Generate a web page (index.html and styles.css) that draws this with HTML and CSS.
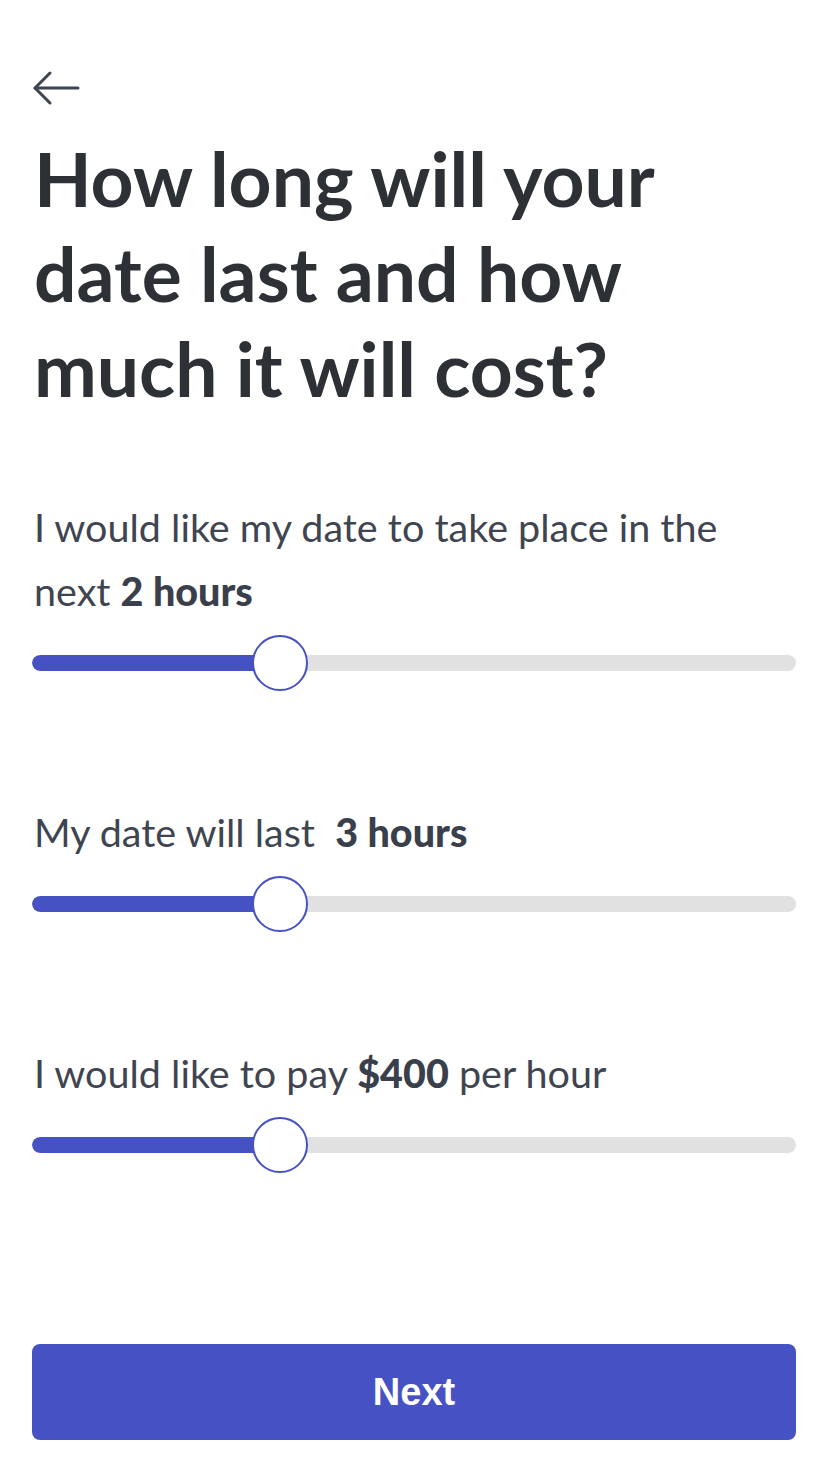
FILE: index.html
```html
<!DOCTYPE html>
<html lang="en">
<head>
<meta charset="utf-8">
<title>Date details</title>
<link rel="stylesheet" href="styles.css">
</head>
<body>
<main class="page">
  <button class="back" aria-label="Back">
    <svg width="48" height="36" viewBox="0 0 48 36" fill="none" stroke="#3f4550" stroke-width="3" stroke-linecap="round" stroke-linejoin="round">
      <path d="M3 18 H46"/>
      <path d="M18 3 L3 18 L18 33"/>
    </svg>
  </button>
  <h1 class="title">How long will your date last and how much it will cost?</h1>

  <section class="field field-first">
    <p class="label label-wrap">I would like my date to take place in the next <b>2 hours</b></p>
    <div class="slider">
      <div class="track"><div class="fill" style="width:32.46%"></div></div>
      <div class="thumb" style="left:calc(32.46% - 28px)"></div>
    </div>
  </section>

  <section class="field">
    <p class="label">My date will last&nbsp; <b>3 hours</b></p>
    <div class="slider">
      <div class="track"><div class="fill" style="width:32.46%"></div></div>
      <div class="thumb" style="left:calc(32.46% - 28px)"></div>
    </div>
  </section>

  <section class="field">
    <p class="label">I would like to pay <b>$400</b> per hour</p>
    <div class="slider">
      <div class="track"><div class="fill" style="width:32.46%"></div></div>
      <div class="thumb" style="left:calc(32.46% - 28px)"></div>
    </div>
  </section>

  <button class="next">Next</button>
</main>
</body>
</html>
```
FILE: styles.css
```css
* { box-sizing: border-box; }
html, body { margin: 0; padding: 0; background: #ffffff; }
body { font-family: "Lato", "Noto Sans", sans-serif; }

.page {
  width: 828px;
  height: 1472px;
  padding: 70px 32px 32px;
  display: flex;
  flex-direction: column;
}

.back {
  width: 48px;
  height: 36px;
  padding: 0;
  border: 0;
  background: none;
  display: block;
}
.back svg { display: block; }

.title {
  margin: 25px 0 0 2px;
  max-width: 700px;
  font-size: 75px;
  line-height: 95px;
  font-weight: 700;
  color: #2d3035;
  letter-spacing: 0;
}

.field { margin-top: 109px; }
.field-first { margin-top: 79px; }

.label {
  margin: 0 0 0 2px;
  font-size: 39.5px;
  line-height: 64px;
  color: #3f4550;
  font-weight: 400;
}
.label-wrap { max-width: 730px; }
.label b { font-weight: 900; color: #3a404b; }

.slider {
  position: relative;
  height: 56px;
  margin-top: 12px;
  display: flex;
  align-items: center;
}
.track {
  width: 100%;
  height: 16px;
  border-radius: 8px;
  background: #e1e1e1;
  overflow: hidden;
}
.fill {
  height: 100%;
  background: #4652c4;
  border-radius: 8px 0 0 8px;
}
.thumb {
  position: absolute;
  top: 0;
  width: 56px;
  height: 56px;
  border-radius: 50%;
  background: #ffffff;
  border: 2px solid #4652c4;
}

.next {
  margin-top: auto;
  height: 96px;
  width: 100%;
  border: 0;
  border-radius: 8px;
  background: #4652c4;
  color: #ffffff;
  font-family: "Liberation Sans", Arial, sans-serif;
  font-weight: 700;
  font-size: 38px;
}
```
